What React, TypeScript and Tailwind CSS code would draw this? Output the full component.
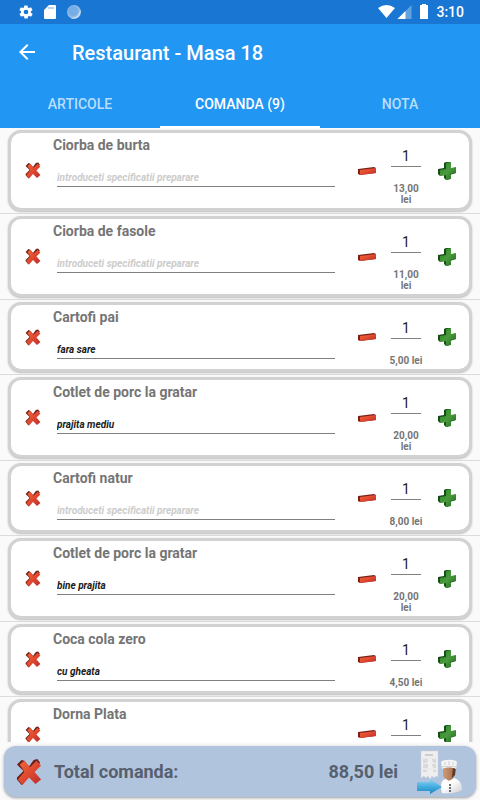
import { useState } from "react";

type OrderItem = {
  name: string;
  note: string;
  quantity: number;
  price: string;
};

const orderItems: OrderItem[] = [
  { name: "Ciorba de burta", note: "", quantity: 1, price: "13,00 lei" },
  { name: "Ciorba de fasole", note: "", quantity: 1, price: "11,00 lei" },
  { name: "Cartofi pai", note: "fara sare", quantity: 1, price: "5,00 lei" },
  { name: "Cotlet de porc la gratar", note: "prajita mediu", quantity: 1, price: "20,00 lei" },
  { name: "Cartofi natur", note: "", quantity: 1, price: "8,00 lei" },
  { name: "Cotlet de porc la gratar", note: "bine prajita", quantity: 1, price: "20,00 lei" },
  { name: "Coca cola zero", note: "cu gheata", quantity: 1, price: "4,50 lei" },
  { name: "Dorna Plata", note: "", quantity: 1, price: "7,00 lei" },
];

const tabs = ["Articole", "Comanda (9)", "Nota"];

// Gradients shared by all the icons below
function IconGradients() {
  return (
    <svg className="absolute h-0 w-0" aria-hidden="true">
      <defs>
        <linearGradient id="red" x1="0" y1="0" x2="1" y2="1">
          <stop offset="0" stopColor="#f0683c" />
          <stop offset="0.5" stopColor="#e0492f" />
          <stop offset="1" stopColor="#b92a2c" />
        </linearGradient>
        <linearGradient id="green" x1="0" y1="0" x2="1" y2="1">
          <stop offset="0" stopColor="#2f862d" />
          <stop offset="0.5" stopColor="#4a9a3c" />
          <stop offset="1" stopColor="#1f6a22" />
        </linearGradient>
        <linearGradient id="arrow" x1="0" y1="0" x2="0" y2="1">
          <stop offset="0" stopColor="#8fd4f3" />
          <stop offset="0.5" stopColor="#45aee0" />
          <stop offset="1" stopColor="#1f86bd" />
        </linearGradient>
        <linearGradient id="coat" x1="0" y1="0" x2="1" y2="1">
          <stop offset="0.4" stopColor="#ffffff" />
          <stop offset="1" stopColor="#cfcfd2" />
        </linearGradient>
        <linearGradient id="skin" x1="0" y1="0" x2="1" y2="0">
          <stop offset="0" stopColor="#d39c77" />
          <stop offset="1" stopColor="#a0694a" />
        </linearGradient>
      </defs>
    </svg>
  );
}

function CrossIcon({ className }: { className: string }) {
  return (
    <svg viewBox="0 0 28 28" className={className} aria-hidden="true">
      <path d="M1 6 6 1 9 2 14 8 19 1 23 0 26 4 16 16 6 28 1 22 1 20 8 13z" fill="#6a211b" />
      <path d="M4 6 9 2 15 9 22 2 27 7 20 14 27 22 21 27 14 20 7 28 2 22 9 14z" fill="url(#red)" />
    </svg>
  );
}

function MinusIcon() {
  return (
    <svg viewBox="0 0 20 10" className="h-[10px] w-5" aria-hidden="true">
      <path d="M1 3 17 1l2 1v5L3 9 1 8z" fill="#7a2019" />
      <path d="M3 4l16-2v5L3 9z" fill="url(#red)" />
    </svg>
  );
}

function PlusIcon() {
  return (
    <svg viewBox="0 0 20 20" className="h-5 w-5" aria-hidden="true">
      <path d="M7 2 9 1H14V7H19V12L13 14V18L9 19 7 17V14L3 15 1 13V8L7 7z" fill="#174b18" />
      <path d="M9 2 14 1V7L19 6V12L14 13V18L9 19V14L3 15V9L9 8z" fill="url(#green)" />
    </svg>
  );
}

function SendToKitchenIcon() {
  return (
    <svg viewBox="0 0 46 44" className="h-[44px] w-[46px]" aria-hidden="true">
      <path d="M5 1H22V27L20 26 18 28 16 26 14 29 12 26 10 28 8 26 5 28z" fill="#efeff0" stroke="#d0d2d6" strokeWidth="0.5" />
      <path d="M9 5h8" stroke="#a9abae" />
      <path d="M7 10h5M7 12h4M7 15h5M7 17h5M7 21h4M16 10h4M17 12h3M16 15h4M17 17h3M17 21h3" stroke="#c3c4c7" />
      <path d="M6 8h14M6 19h14" stroke="#dcdde0" strokeWidth="0.5" />
      <path d="M27 17h12v7l-3 6-5 1-4-5z" fill="url(#skin)" />
      <path d="M37 17h3l-1 8-3 3z" fill="#5c3826" />
      <path d="M26 43c-2-8-1-13 4-14l3 2 5-3c6 2 8 6 8 12-5 3-16 4-20 3z" fill="url(#coat)" />
      <path d="M26 19l-1-7c2-3 14-3 16 0l-1 7c-4-2-10-2-14 0z" fill="#f5f5f6" />
      <path d="M26 17c4-1 10-1 14 0M29 12v3M33 11v4M37 12v3" stroke="#c3c4c7" strokeWidth="0.8" fill="none" />
      <path d="M34 34v2M34 37v2M34 40v2" stroke="#33353a" strokeWidth="1.4" />
      <path d="M1 32h13v-3l12 8-12 7v-3H1z" fill="url(#arrow)" />
    </svg>
  );
}

function StatusBar() {
  return (
    <div className="flex h-6 items-center justify-between bg-[#1976d2] pr-4 pl-[18px] text-white">
      <div className="flex items-center gap-2">
        <svg viewBox="0 0 24 24" className="h-4 w-4" fill="currentColor" aria-hidden="true">
          <path d="M19.4 13c0-.3.1-.6.1-1s0-.7-.1-1l2.100-1.600c.2-.2.300-.4.100-.6l-2-3.500c-.1-.2-.4-.3-.6-.2l-2.500 1c-.5-.4-1.100-.7-1.700-1l-.4-2.600c0-.2-.2-.4-.5-.4h-4c-.2 0-.5.200-.5.400l-.4 2.600c-.6.300-1.200.6-1.700 1l-2.500-1c-.2-.1-.5 0-.6.200l-2 3.500c-.1.200-.1.500.1.600L4.600 11c0 .3-.1.6-.1 1s0 .7.100 1l-2.100 1.600c-.2.200-.3.400-.1.600l2 3.500c.1.200.4.300.6.200l2.500-1c.5.400 1.100.7 1.700 1l.4 2.600c0 .2.200.4.500.4h4c.2 0 .5-.2.500-.4l.4-2.600c.6-.3 1.200-.6 1.700-1l2.500 1c.2.100.5 0 .6-.2l2-3.500c.1-.2.100-.5-.1-.6zM12 15.500a3.500 3.500 0 110-7 3.500 3.500 0 010 7z" />
        </svg>
        <svg viewBox="0 0 16 16" className="h-4 w-4" aria-hidden="true">
          <path d="M7 1h6q1 0 1 1v12q0 1-1 1H3q-1 0-1-1V6z" fill="#fff" />
          <path d="M7 3v2M9 3v2M11 3v2" stroke="#75ade4" />
        </svg>
        <svg viewBox="0 0 16 16" className="h-4 w-4" aria-hidden="true">
          <circle cx="8" cy="8" r="7" fill="#8fbce9" />
          <path d="M14 5a7 7 0 01-9 9c6 0 9-3 9-9z" fill="#e3eefa" />
          <circle cx="7" cy="7" r="5" fill="#75ade4" />
        </svg>
      </div>
      <div className="flex items-center">
        <svg viewBox="0 0 18 16" className="h-4 w-[18px]" aria-hidden="true">
          <path d="M0 4Q8.500-2 17 4L8.500 14z" fill="#fff" />
        </svg>
        <svg viewBox="0 0 16 16" className="ml-px h-4 w-4" aria-hidden="true">
          <path d="M14.500 1v14H.5z" fill="#63a1df" />
          <path d="M8.500 7v8h-8z" fill="#fff" />
        </svg>
        <svg viewBox="0 0 8 16" className="ml-[7px] h-4 w-2" aria-hidden="true">
          <path d="M2 0h4v1h2v14H0V1h2z" fill="#fff" />
        </svg>
        <span className="ml-2 text-sm font-medium">3:10</span>
      </div>
    </div>
  );
}

function OrderRow({ item, index }: { item: OrderItem; index: number }) {
  const [quantity, setQuantity] = useState(item.quantity);
  const [note, setNote] = useState(item.note);

  return (
    <li className="border-b border-[#dcdcdc] px-2 pt-[2px] pb-[2px]">
      <div className="flex rounded-[13px] border-[3px] border-[#d2d2d2] bg-white shadow-[0_1px_2px_#bbbbbb]">
        <button type="button" aria-label={`Sterge ${item.name}`} className="flex w-[42px] shrink-0 items-center justify-center pl-[2px]">
          <CrossIcon className="h-[17px] w-4" />
        </button>
        <div className="min-w-0 flex-1">
          <label htmlFor={`note-${index}`} className="block text-sm leading-6 font-bold text-[#757575]">
            {item.name}
          </label>
          <input
            id={`note-${index}`}
            value={note}
            onChange={(e) => setNote(e.target.value)}
            placeholder="introduceti specificatii preparare"
            className="mx-1 mt-2 block h-[22px] w-[calc(100%-4px)] border-b border-[#808080] pt-1 text-[10px] font-bold text-[#202020] italic outline-none placeholder:text-[#cccccc]"
          />
        </div>
        <button
          type="button"
          aria-label="Scade cantitatea"
          onClick={() => setQuantity(Math.max(0, quantity - 1))}
          className="ml-4 flex w-8 shrink-0 items-center justify-center"
        >
          <MinusIcon />
        </button>
        <div className="mr-2 ml-[6px] w-[34px] shrink-0 pt-3 pb-[3px] text-center">
          <input
            aria-label={`Cantitate ${item.name}`}
            value={quantity}
            onChange={(e) => setQuantity(Number(e.target.value) || 0)}
            className="mx-auto block h-[22px] w-[30px] border-b border-[#808080] text-center text-sm text-[#202020] outline-none"
          />
          <p className="mt-4 text-[10px] leading-[11px] font-bold text-[#757575]">{item.price}</p>
        </div>
        <button
          type="button"
          aria-label="Creste cantitatea"
          onClick={() => setQuantity(quantity + 1)}
          className="mr-[6px] flex w-8 shrink-0 items-center justify-center"
        >
          <PlusIcon />
        </button>
      </div>
    </li>
  );
}

export default function App() {
  const [activeTab, setActiveTab] = useState(1);

  return (
    <div className="flex h-screen flex-col bg-[#fafafa] font-[Roboto,sans-serif]">
      <IconGradients />
      <StatusBar />

      {/* App bar */}
      <header className="bg-[#2196f3] text-white">
        <div className="flex h-14 items-center px-4 pt-[2px]">
          <button type="button" aria-label="Inapoi" className="mr-8">
            <svg viewBox="0 0 24 24" className="h-6 w-6" fill="currentColor" aria-hidden="true">
              <path d="M19 10H6.830l5.590-5.590L11 3l-8 8 8 8 1.410-1.410L6.830 12H19v-2z" />
            </svg>
          </button>
          <h1 className="text-xl font-medium">Restaurant - Masa 18</h1>
        </div>
        <nav className="grid h-12 grid-cols-3">
          {tabs.map((tab, index) => (
            <button
              key={tab}
              type="button"
              onClick={() => setActiveTab(index)}
              className={
                index === activeTab
                  ? "border-b-2 border-white pt-[2px] text-sm font-medium uppercase"
                  : "border-b-2 border-transparent pt-[2px] text-sm font-medium text-white/70 uppercase"
              }
            >
              {tab}
            </button>
          ))}
        </nav>
      </header>

      {/* Order list */}
      <ul className="min-h-0 flex-1 overflow-y-auto [scrollbar-width:none]">
        {orderItems.map((item, index) => (
          <OrderRow key={index} item={item} index={index} />
        ))}
      </ul>

      {/* Total */}
      <footer className="mx-1 mt-1 mb-[3px] flex h-[51px] shrink-0 items-center rounded-xl bg-[#b0c4de] pr-[14px] pl-3 text-lg font-bold text-[#56606e] shadow-[0_1px_3px_#999999]">
        <button type="button" aria-label="Anuleaza comanda" className="mr-3">
          <CrossIcon className="h-[28px] w-[26px]" />
        </button>
        <span className="flex-1">Total comanda:</span>
        <span className="mr-[18px]">88,50 lei</span>
        <button type="button" aria-label="Trimite la bucatarie">
          <SendToKitchenIcon />
        </button>
      </footer>
    </div>
  );
}
